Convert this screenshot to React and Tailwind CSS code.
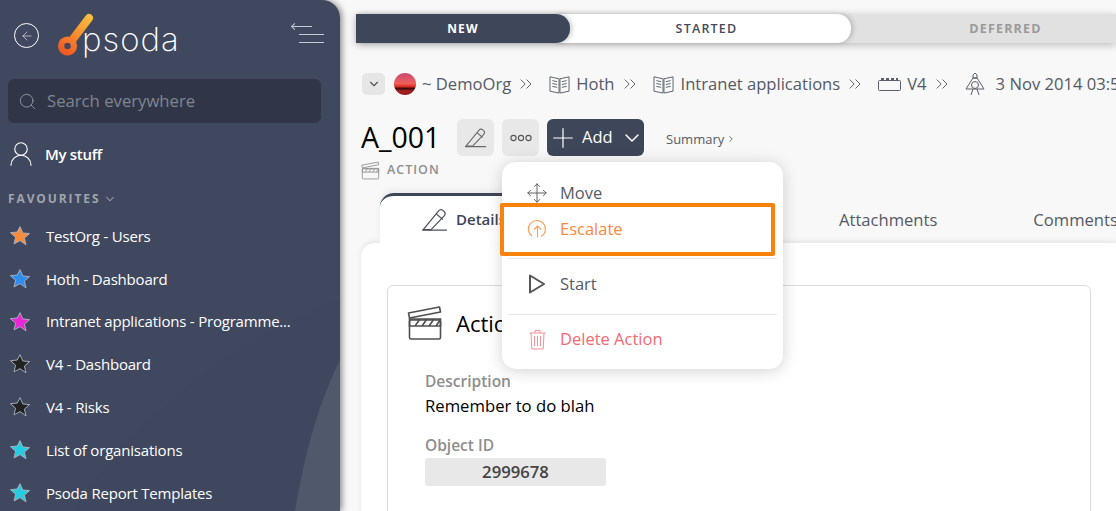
import { ChevronDown, ChevronRight, ChevronsRight, Search, UserRound, Plus, Move, ArrowLeft } from "lucide-react";

const favourites = [
  { name: "TestOrg - Users", color: "#f98b3c" },
  { name: "Hoth - Dashboard", color: "#2f8cf0" },
  { name: "Intranet applications - Programme...", color: "#e926d3" },
  { name: "V4 - Dashboard", color: "#222222" },
  { name: "V4 - Risks", color: "#222222" },
  { name: "List of organisations", color: "#27cbe2" },
  { name: "Psoda Report Templates", color: "#27cbe2" },
];

function Star({ color }) {
  return (
    <svg width="22" height="22" viewBox="0 0 24 24" className="shrink-0">
      <path
        d="M12 1.8l3 6.9 7.4.7-5.6 4.9 1.7 7.3L12 17l-6.5 3.6 1.7-7.3-5.6-4.9 7.4-.7z"
        fill={color}
        stroke="#aeb4c0"
        strokeWidth="1"
        strokeLinejoin="round"
      />
    </svg>
  );
}

function Logo() {
  return (
    <div className="flex items-start">
      <svg width="38" height="44" viewBox="0 0 38 44" className="shrink-0">
        <defs>
          <linearGradient id="logoGrad" gradientUnits="userSpaceOnUse" x1="33" y1="3" x2="8" y2="40">
            <stop offset="0" stopColor="#f8c040" />
            <stop offset="0.55" stopColor="#f68a2c" />
            <stop offset="1" stopColor="#f15a24" />
          </linearGradient>
        </defs>
        <path d="M32 5 L13 30" stroke="url(#logoGrad)" strokeWidth="8" strokeLinecap="round" fill="none" />
        <circle cx="10.500" cy="33" r="9.500" fill="url(#logoGrad)" />
        <circle cx="10.500" cy="33" r="3.200" fill="#3f485f" />
      </svg>
      <span className="mt-[7px] -ml-[13px] font-['Inter',sans-serif] text-[33px] leading-[38px] font-extralight tracking-[1px] text-white">psoda</span>
    </div>
  );
}

function BookIcon() {
  return (
    <svg width="21" height="22" viewBox="0 0 22 22" fill="none" stroke="#5a5f6b" strokeWidth="1" className="shrink-0">
      <path d="M1 3.500l9.500 2v15l-9.500-2zM21 3.500l-9.500 2v15l9.500-2z" />
      <path d="M3.500 7.500l5 1M3.500 10.500l5 1M3.500 13.500l5 1M18.500 7.500l-5 1M18.500 10.500l-5 1M18.500 13.500l-5 1" />
    </svg>
  );
}

function PencilIcon({ size = 24, color = "#5c6068" }) {
  return (
    <svg width={size} height={size} viewBox="0 0 24 24" fill="none" stroke={color} strokeWidth="1.100" className="shrink-0">
      <path d="M2 21L15.500 4.500a3 3 0 0 1 4.200-.4l.6.5a3 3 0 0 1 .3 4.200L9 21z" strokeLinejoin="round" />
      <path d="M13.500 7l6 5M1 21.500h22" />
    </svg>
  );
}

function ClapperIcon({ size = 22, color = "#55585f", width = 1 }) {
  return (
    <svg width={size} height={size} viewBox="0 0 36 36" fill="none" stroke={color} strokeWidth={width * 1.6} className="shrink-0">
      <rect x="2.500" y="15" width="31" height="19" rx="1.500" />
      <path d="M2.500 15v-1h31v7h-31zM8 21l5-7M15 21l5-7M22 21l5-7M29 21l4-6" />
      <path d="M1.500 8l31-6 1 5-31 6z" strokeLinejoin="round" />
    </svg>
  );
}

const Sep = () => <ChevronsRight size={20} strokeWidth={1} className="mr-[13px] ml-[5px] shrink-0 text-[#444]" />;

function MenuRow({ icon, label, className }) {
  return (
    <div className={`flex items-center gap-[12px] pl-[24px] text-[16.500px] ${className}`}>
      <span className="flex w-[22px] justify-center">{icon}</span>
      <span>{label}</span>
    </div>
  );
}

export default function App() {
  return (
    <div className="relative flex h-[511px] w-[1116px] overflow-hidden bg-[#f8f8f8] font-['Open_Sans',sans-serif]">
      <aside className="relative z-10 w-[340px] shrink-0 overflow-hidden rounded-tr-[18px] bg-[#3f485f] shadow-[2px_0_6px_rgba(0,0,0,0.45)]">
        {/* background swooshes */}
        <svg className="absolute inset-0" width="340" height="511" viewBox="0 0 340 511">
          <path d="M75 511C130 420 230 345 340 300V511Z" fill="#3e475d" />
          <path d="M295 511C305 450 320 400 340 360V511Z" fill="#50586b" />
        </svg>
        <div className="relative flex h-full flex-col">
          <div className="flex h-[65px] items-start pt-[13px]">
            <div className="mt-[10px] ml-[14px] flex h-[25px] w-[25px] items-center justify-center rounded-full border border-white">
              <ArrowLeft size={14} strokeWidth={1} className="text-white" />
            </div>
            <div className="ml-[18px]">
              <Logo />
            </div>
            <div className="mt-[13px] mr-[16px] ml-auto flex flex-col items-end gap-[7px]">
              <div className="relative mr-[12px] h-[1px] w-[19px] bg-[#c8ccd4]">
                <div className="absolute -top-[2px] -left-[1px] h-[5px] w-[5px] rotate-45 border-b border-l border-[#c8ccd4]" />
              </div>
              <div className="h-[1px] w-[25px] bg-[#c8ccd4]" />
              <div className="h-[1px] w-[25px] bg-[#c8ccd4]" />
            </div>
          </div>
          <div className="mx-[8px] mt-[14px] flex h-[44px] w-[313px] items-center rounded-[6px] bg-[#303647] pl-[10px]">
            <Search size={19} strokeWidth={1} className="text-[#a3a7b0]" />
            <span className="ml-[10px] text-[16.700px] text-[#7f8591]">Search everywhere</span>
          </div>
          <div className="mt-[16px] flex items-center pl-[6px]">
            <UserRound size={30} strokeWidth={0.900} className="text-white" />
            <span className="ml-[9px] text-[15px] font-semibold tracking-[-0.3px] text-white">My stuff</span>
          </div>
          <div className="mt-[21px] flex items-center pl-[8px] text-[12px] font-bold tracking-[1.900px] text-[#a0a4ad]">
            FAVOURITES
            <ChevronDown size={14} strokeWidth={1.800} className="ml-[3px]" />
          </div>
          <ul className="mt-[17px] flex flex-col gap-[20.800px] pl-[9px]">
            {favourites.map((f) => (
              <li key={f.name} className="flex h-[22px] items-center">
                <Star color={f.color} />
                <span className="ml-[15px] text-[15px] font-normal tracking-[-0.2px] whitespace-nowrap text-white">{f.name}</span>
              </li>
            ))}
          </ul>
        </div>
      </aside>

      <main className="min-w-0 flex-1 pl-[16px]">
        <div className="mt-[14px] flex h-[29px] shadow-[0_2px_8px_rgba(0,0,0,0.25)]">
          <div className="z-20 flex w-[214px] shrink-0 items-center justify-center rounded-r-[14px] bg-[#3e4659] text-[12px] font-bold tracking-[1.200px] text-white shadow-[2px_0_5px_rgba(0,0,0,0.2)]">NEW</div>
          <div className="z-10 -ml-[14px] flex w-[295px] shrink-0 items-center justify-center rounded-r-[14px] bg-white pt-[1px] pl-[6px] text-[12.500px] font-semibold tracking-[1.200px] text-[#444b5b] shadow-[2px_0_5px_rgba(0,0,0,0.2)]">STARTED</div>
          <div className="-ml-[14px] flex min-w-0 flex-1 items-center justify-center bg-[#e1e1e1] pt-[1px] pl-[14px] text-[12.500px] font-bold tracking-[1.200px] text-[#9a9a9a]">
            <span className="ml-[44px]">DEFERRED</span>
          </div>
        </div>

        <div className="mt-[29px] ml-[6px] flex h-[24px] items-center text-[16.600px] whitespace-nowrap text-[#555a66]">
          <div className="flex h-[22px] w-[23px] shrink-0 items-center justify-center rounded-[5px] bg-[#e6e6e6]">
            <ChevronDown size={14} className="text-[#555]" />
          </div>
          <div className="ml-[9px] h-[22px] w-[22px] shrink-0 rounded-full bg-[linear-gradient(#c84a72_0%,#f0605a_48%,#d92b1e_62%,#3a0a0a_70%,#a82222_82%,#8c1c1c_100%)]" />
          <span className="ml-[6px]">~ DemoOrg</span>
          <Sep />
          <BookIcon />
          <span className="ml-[6px]">Hoth</span>
          <Sep />
          <BookIcon />
          <span className="ml-[7px]">Intranet applications</span>
          <Sep />
          <svg width="23" height="14" viewBox="0 0 23 14" fill="none" stroke="#5a5f6b" strokeWidth="1" className="shrink-0">
            <rect x="0.500" y="3.500" width="22" height="10" rx="1" />
            <path d="M3 2h3M8 2h3M13 2h3M18 2h2" strokeWidth="2" />
          </svg>
          <span className="ml-[6px]">V4</span>
          <Sep />
          <svg width="20" height="24" viewBox="0 0 20 24" fill="none" stroke="#5a5f6b" strokeWidth="1" className="shrink-0">
            <path d="M8 6V3l2-2 2 2v3zM6 9l2-3h4l2 3 5 8H1z" />
            <circle cx="10" cy="13" r="3.500" />
            <path d="M6 23l2-6M14 23l-2-6" />
          </svg>
          <span className="ml-[11px]">3 Nov 2014 03:50</span>
        </div>

        <div className="mt-[23px] ml-[5px] flex items-start">
          <div className="w-[80px] shrink-0">
            <h1 className="text-[28.500px] leading-[37px] font-normal text-black">A_001</h1>
            <div className="mt-[4px] flex items-center gap-[7px] text-[12.500px] leading-[20px] font-semibold tracking-[1px] text-[#8e8e8e]">
              <ClapperIcon size={19} color="#8e8e8e" />
              ACTION
            </div>
          </div>
          <div className="ml-[16px] flex h-[37px] w-[37px] items-center justify-center rounded-[6px] bg-[#e8e8e8]">
            <PencilIcon size={23} color="#6a6a6a" />
          </div>
          <div className="ml-[8px] flex h-[37px] w-[37px] items-center justify-center rounded-[6px] bg-[#e8e8e8]">
            <svg width="22" height="8" viewBox="0 0 22 8" fill="none" stroke="#555" strokeWidth="1.100">
              <circle cx="3.500" cy="4" r="2.600" />
              <circle cx="11" cy="4" r="2.600" />
              <circle cx="18.500" cy="4" r="2.600" />
            </svg>
          </div>
          <div className="ml-[8px] flex h-[37px] w-[97px] items-center rounded-[6px] bg-[#3e4659] text-[16.500px] font-medium text-white">
            <Plus size={32} strokeWidth={0.900} className="shrink-0" />
            <span className="ml-[3px]">Add</span>
            <ChevronDown size={24} strokeWidth={1.500} className="ml-[7px] shrink-0" />
          </div>
          <div className="mt-[10px] ml-[22px] flex items-center text-[13px] leading-[20px] text-[#555a66]">
            Summary
            <ChevronRight size={10} strokeWidth={2} className="ml-[2px]" />
          </div>
        </div>

        {/* tabs */}
        <div className="mt-[13px] ml-[8px] flex h-[50px] items-end">
          <div className="ml-[16px] flex h-[50px] w-[204px] shrink-0 items-center rounded-t-[14px] border-t-[3px] border-[#3e4659] bg-white pl-[41px] text-[15px] font-semibold text-[#3e4659] shadow-[0_-3px_6px_rgba(0,0,0,0.06)]">
            <span className="flex items-center gap-[8px]">
              <PencilIcon size={27} color="#4b505c" />
              Details
            </span>
          </div>
          <div className="flex h-[47px] flex-1 items-center pt-[2px] text-[16.600px] whitespace-nowrap text-[#555a66]">
            <span className="ml-[255px]">Attachments</span>
            <span className="ml-[96px]">Comments</span>
          </div>
        </div>

        {/* content card */}
        <div className="ml-[5px] h-[300px] rounded-tl-[14px] bg-white px-[26px] pt-[42px] shadow-[0_-2px_5px_rgba(0,0,0,0.08)]">
          <div className="h-[240px] w-[704px] rounded-[6px] border border-[#dcdcdc] pt-[19px] pl-[19px]">
            <div className="flex items-center gap-[13px]">
              <ClapperIcon size={36} color="#4f4f4f" />
              <span className="text-[22px] font-normal text-black">Action Details</span>
            </div>
            <div className="mt-[30px] ml-[18px] text-[15.500px] leading-[20px] font-semibold text-[#8e8e8e]">Description</div>
            <div className="mt-[4px] ml-[18px] text-[16.700px] leading-[22px] text-black">Remember to do blah</div>
            <div className="mt-[18px] ml-[18px] text-[15.500px] leading-[20px] font-semibold text-[#8e8e8e]">Object ID</div>
            <div className="mt-[3px] ml-[18px] flex h-[28px] w-[181px] items-center justify-center rounded-[3px] bg-[#e8e8e8] text-[16.700px] font-semibold text-[#444]">2999678</div>
          </div>
        </div>
      </main>

      {/* popup menu */}
      <div className="absolute top-[162px] left-[502px] z-20 h-[207px] w-[281px] rounded-[14px] bg-white shadow-[0_2px_16px_rgba(0,0,0,0.18)]">
        <div className="flex h-[207px] flex-col">
          <MenuRow className="mt-[19px] h-[24px] text-[#555a66]" icon={<Move size={22} strokeWidth={1} className="text-[#555]" />} label="Move" />
          <MenuRow
            className="mt-[12px] h-[24px] text-[#f98a3e]"
            icon={
              <svg width="20" height="20" viewBox="0 0 20 20" fill="none" stroke="#f9a05c" strokeWidth="1.100">
                <path d="M5 17A8.500 8.500 0 1 1 14 17.500M10.500 18.500V7M7 10.500L10.500 7l3.500 3.500" />
              </svg>
            }
            label="Escalate"
          />
          <div className="mx-[6px] mt-[17px] h-[1px] bg-[#e8e8e8]" />
          <MenuRow
            className="mt-[13px] h-[24px] text-[#555a66]"
            icon={
              <svg width="18" height="22" viewBox="0 0 18 22" fill="none" stroke="#555" strokeWidth="2" strokeLinejoin="round">
                <path d="M2 2.500L16 11 2 19.500z" />
              </svg>
            }
            label="Start"
          />
          <div className="mx-[6px] mt-[18px] h-[1px] bg-[#e8e8e8]" />
          <MenuRow
            className="mt-[12px] h-[24px] text-[#f26a72]"
            icon={
              <svg width="17" height="21" viewBox="0 0 17 21" fill="none" stroke="#f59097" strokeWidth="1">
                <path d="M0.500 4h16M6 4V1.500h5V4M2 4l.8 16h11.400l.8-16M5.500 7v10M8.500 7v10M11.500 7v10" />
              </svg>
            }
            label="Delete Action"
          />
        </div>
      </div>

      {/* orange highlight */}
      <div className="absolute top-[203px] left-[500px] z-30 h-[53px] w-[275px] rounded-[2px] border-4 border-[#f8820c]" />
    </div>
  );
}
